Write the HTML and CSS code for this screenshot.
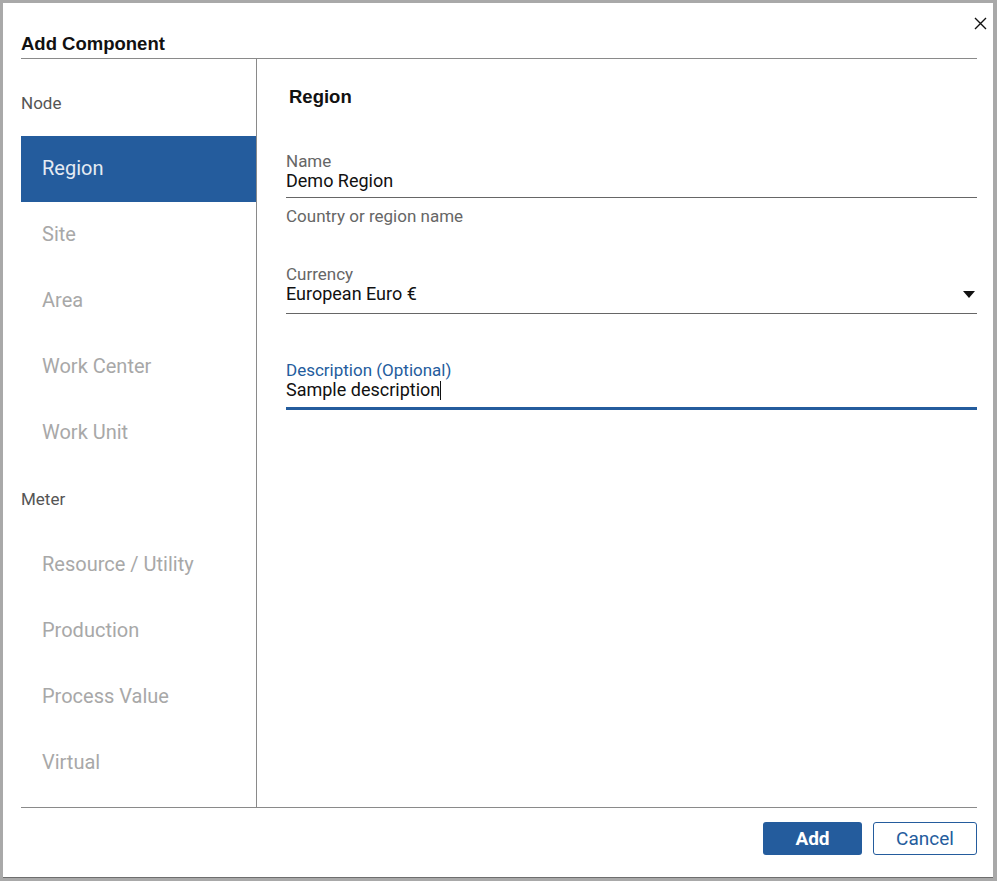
FILE: index.html
```html
<!DOCTYPE html>
<html lang="en">
<head>
    <meta charset="UTF-8">
    <meta name="viewport" content="width=device-width, initial-scale=1.0">
    <title>Add Component</title>
    <link rel="stylesheet" href="styles.css">
</head>
<body>
    <div class="dialog">
        <div class="dialog-header">
            <h1 class="dialog-title">Add Component</h1>
            <button class="close-btn" aria-label="Close">
                <svg width="13" height="13" viewBox="0 0 13 13">
                    <path d="M1 1L12 12M12 1L1 12" stroke="#111" stroke-width="1.4" fill="none"/>
                </svg>
            </button>
        </div>

        <div class="dialog-body">
            <div class="sidebar">
                <div class="section-label">Node</div>
                <div class="nav-item active">Region</div>
                <div class="nav-item">Site</div>
                <div class="nav-item">Area</div>
                <div class="nav-item">Work Center</div>
                <div class="nav-item">Work Unit</div>
                <div class="section-label">Meter</div>
                <div class="nav-item">Resource / Utility</div>
                <div class="nav-item">Production</div>
                <div class="nav-item">Process Value</div>
                <div class="nav-item">Virtual</div>
            </div>

            <div class="content">
                <h2 class="content-title">Region</h2>

                <div class="field field-name">
                    <div class="field-label">Name</div>
                    <div class="field-value">Demo Region</div>
                </div>
                <div class="field-hint">Country or region name</div>

                <div class="field field-select">
                    <div class="field-label">Currency</div>
                    <div class="field-value">
                        <span>European Euro €</span>
                        <span class="caret"></span>
                    </div>
                </div>

                <div class="field field-focused">
                    <div class="field-label">Description (Optional)</div>
                    <div class="field-value">Sample description<span class="cursor"></span></div>
                </div>
            </div>
        </div>

        <div class="dialog-footer">
            <button class="btn btn-primary">Add</button>
            <button class="btn btn-secondary">Cancel</button>
        </div>
    </div>
</body>
</html>
```

FILE: styles.css
```css
:root {
    --blue: #245c9d;
    --line: #8a8a8a;
    --muted: #a8a8a8;
    --label: #666;
}

* {
    box-sizing: border-box;
    margin: 0;
    padding: 0;
}

body {
    background: #a9a9a9;
    padding: 3px 4px 4px 3px;
    font-family: Roboto, 'Liberation Sans', sans-serif;
    color: #111;
}

.dialog {
    width: 990px;
    height: 874px;
    background: white;
    display: flex;
    flex-direction: column;
    box-shadow: 0 1px 0 #6e6e6e;
}

.dialog-header {
    position: relative;
    margin: 0 16px 0 18px;
    padding: 31px 0 4px;
    border-bottom: 1px solid var(--line);
}

.dialog-title,
.content-title {
    font-family: 'Liberation Sans', Arial, sans-serif;
    font-size: 18.5px;
    font-weight: bold;
    line-height: 20px;
}

.close-btn {
    position: absolute;
    top: 14px;
    right: -10px;
    background: none;
    border: none;
    width: 13px;
    height: 13px;
    display: flex;
}

.dialog-body {
    flex: 1;
    display: flex;
    margin: 0 16px 0 18px;
    border-bottom: 1px solid var(--line);
}

.sidebar {
    width: 236px;
    padding-top: 11px;
    border-right: 1px solid var(--line);
}

.section-label {
    font-size: 17px;
    line-height: 20px;
    color: #555;
    padding: 23px 0;
}

.nav-item {
    height: 66px;
    line-height: 65px;
    padding-left: 21px;
    font-size: 20px;
    color: var(--muted);
}

.nav-item.active {
    background: var(--blue);
    color: #e4ebf3;
}

.content {
    flex: 1;
    padding: 28px 0 0 29px;
}

.content-title {
    padding-left: 3px;
}

.field {
    border-bottom: 1px solid #666;
}

.field-name {
    margin-top: 45px;
    padding-bottom: 5px;
}

.field-label {
    font-size: 17px;
    line-height: 18px;
    color: var(--label);
}

.field-value {
    font-size: 18px;
    line-height: 22px;
    color: #111;
}

.field-hint {
    margin-top: 9px;
    font-size: 17px;
    line-height: 18px;
    color: var(--label);
}

.field-select {
    margin-top: 40px;
    padding-bottom: 8px;
}

.field-select .field-value {
    display: flex;
    justify-content: space-between;
    align-items: center;
}

.caret {
    width: 0;
    height: 0;
    margin-right: 2px;
    border-left: 6px solid transparent;
    border-right: 6px solid transparent;
    border-top: 7px solid #111;
}

.field-focused {
    margin-top: 47px;
    padding-bottom: 6px;
    border-bottom: 3px solid var(--blue);
}

.field-focused .field-label {
    color: var(--blue);
}

.cursor {
    display: inline-block;
    width: 1px;
    height: 19px;
    background: #111;
    vertical-align: -4px;
}

.dialog-footer {
    display: flex;
    justify-content: flex-end;
    gap: 11px;
    padding: 14px 16px 0 0;
    height: 69px;
}

.btn {
    height: 33px;
    font-family: Roboto, sans-serif;
    font-size: 19px;
    border-radius: 3px;
    cursor: pointer;
}

.btn-primary {
    width: 99px;
    background: var(--blue);
    color: white;
    font-weight: bold;
    border: none;
}

.btn-secondary {
    width: 104px;
    background: white;
    color: var(--blue);
    border: 1px solid var(--blue);
}
```
